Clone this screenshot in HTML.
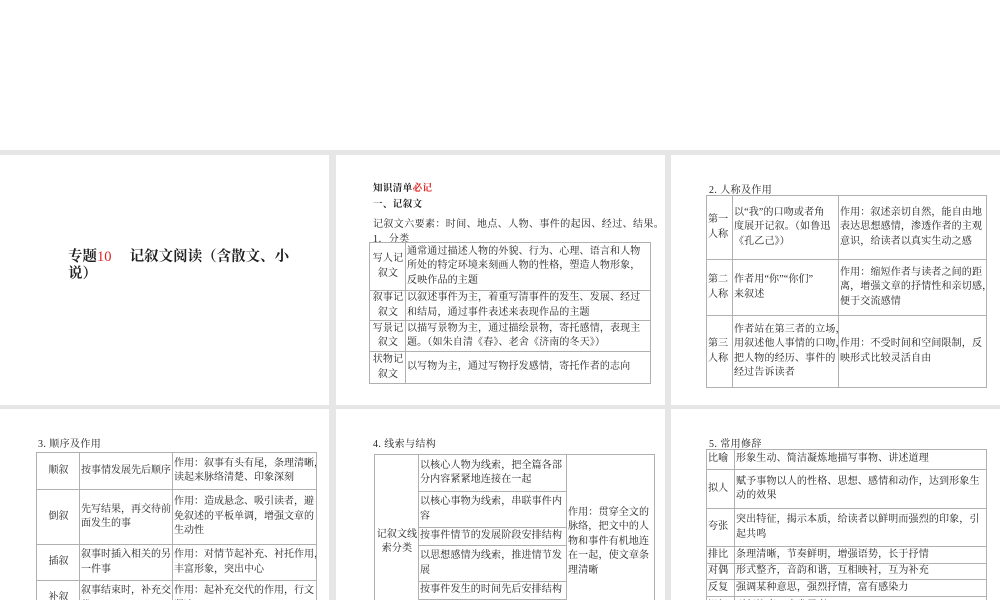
<!DOCTYPE html><html><head><meta charset="utf-8"><style>
body{margin:0;width:1000px;height:600px;overflow:hidden;background:#fff;position:relative;font-family:"Liberation Serif","Noto Serif CJK SC",serif;color:#222}
.bg{position:absolute;left:0;top:150px;width:1000px;height:450px;background:#e6e6e6}
.p{position:absolute;background:#fff;overflow:hidden}
.a{position:absolute;font-size:10px;letter-spacing:0.4px;white-space:nowrap}
table{position:absolute;border-collapse:collapse;font-size:10px;letter-spacing:0.15px;line-height:14.5px;table-layout:fixed}
td{border:1px solid #b0b0b0;padding:0 0 0 1px;vertical-align:middle;overflow:hidden;white-space:nowrap}
.c{text-align:center}
</style></head><body>
<div class="bg"></div>
<div class="p" style="left:0;top:155px;width:329px;height:250px">
<div style="position:absolute;left:68px;top:94px;width:240px;font-size:14.5px;font-weight:bold;line-height:17px;font-family:'Liberation Serif','Noto Serif CJK SC',serif">专题<span style="color:#d22;font-weight:normal">10</span>　 记叙文阅读（含散文、小说）</div>
</div>
<div class="p" style="left:336px;top:155px;width:329px;height:250px">
<div class="a" style="left:37px;top:25px;font-weight:bold;font-size:9.5px">知识清单<span style="color:#d22">必记</span></div>
<div class="a" style="left:37px;top:41px;font-weight:bold;font-size:9.5px">一、记叙文</div>
<div class="a" style="left:37px;top:60px">记叙文六要素：时间、地点、人物、事件的起因、经过、结果。</div>
<div class="a" style="left:37px;top:75px">1．分类</div>
<table style="left:33px;top:87px;width:282px"><col style="width:36px"><col>
<tr style="height:48px"><td class="c">写人记<br>叙文</td><td>通常通过描述人物的外貌、行为、心理、语言和人物<br>所处的特定环境来刻画人物的性格，塑造人物形象，<br>反映作品的主题</td></tr>
<tr style="height:30px"><td class="c">叙事记<br>叙文</td><td>以叙述事件为主，着重写清事件的发生、发展、经过<br>和结局，通过事件表述来表现作品的主题</td></tr>
<tr style="height:31px"><td class="c">写景记<br>叙文</td><td>以描写景物为主，通过描绘景物，寄托感情，表现主<br>题。（如朱自清《春》、老舍《济南的冬天》）</td></tr>
<tr style="height:32px"><td class="c">状物记<br>叙文</td><td>以写物为主，通过写物抒发感情，寄托作者的志向</td></tr>
</table></div>
<div class="p" style="left:671px;top:155px;width:329px;height:250px">
<div class="a" style="left:38px;top:26px">2. 人称及作用</div>
<table style="left:35px;top:40px;width:281px"><col style="width:26px"><col style="width:106px"><col>
<tr style="height:64px"><td>第一<br>人称</td><td>以“我”的口吻或者角<br>度展开记叙。（如鲁迅<br>《孔乙己》）</td><td>作用：叙述亲切自然，能自由地<br>表达思想感情，渗透作者的主观<br>意识，给读者以真实生动之感</td></tr>
<tr style="height:56px"><td>第二<br>人称</td><td>作者用“你”“你们”<br>来叙述</td><td>作用：缩短作者与读者之间的距<br>离，增强文章的抒情性和亲切感，<br>便于交流感情</td></tr>
<tr style="height:72px"><td>第三<br>人称</td><td>作者站在第三者的立场，<br>用叙述他人事情的口吻，<br>把人物的经历、事件的<br>经过告诉读者</td><td>作用：不受时间和空间限制，反<br>映形式比较灵活自由</td></tr>
</table></div>
<div class="p" style="left:0;top:409px;width:329px;height:191px">
<div class="a" style="left:38px;top:26px">3. 顺序及作用</div>
<table style="left:36px;top:43px;width:281px;letter-spacing:0"><col style="width:43px"><col style="width:93px"><col>
<tr style="height:37px"><td class="c">顺叙</td><td>按事情发展先后顺序</td><td>作用：叙事有头有尾，条理清晰，<br>读起来脉络清楚、印象深刻</td></tr>
<tr style="height:55px"><td class="c">倒叙</td><td>先写结果，再交待前<br>面发生的事</td><td>作用：造成悬念、吸引读者，避<br>免叙述的平板单调，增强文章的<br>生动性</td></tr>
<tr style="height:36px"><td class="c">插叙</td><td>叙事时插入相关的另<br>一件事</td><td>作用：对情节起补充、衬托作用，<br>丰富形象，突出中心</td></tr>
<tr style="height:36px"><td class="c">补叙</td><td>叙事结束时，补充交<br>代</td><td>作用：起补充交代的作用，行文<br>紧凑</td></tr>
</table></div>
<div class="p" style="left:336px;top:409px;width:329px;height:191px">
<div class="a" style="left:37px;top:26px">4. 线索与结构</div>
<table style="left:38px;top:45px;width:281px"><col style="width:44px"><col style="width:148px"><col>
<tr style="height:37px"><td class="c" rowspan="6">记叙文线<br>索分类</td><td>以核心人物为线索，把全篇各部<br>分内容紧紧地连接在一起</td><td rowspan="6">作用：贯穿全文的<br>脉络，把文中的人<br>物和事件有机地连<br>在一起，使文章条<br>理清晰</td></tr>
<tr style="height:36px"><td>以核心事物为线索，串联事件内<br>容</td></tr>
<tr style="height:18px"><td>按事件情节的发展阶段安排结构</td></tr>
<tr style="height:36px"><td>以思想感情为线索，推进情节发<br>展</td></tr>
<tr style="height:18px"><td>按事件发生的时间先后安排结构</td></tr>
<tr style="height:30px"><td>以空间转换为线索</td></tr>
</table></div>
<div class="p" style="left:671px;top:409px;width:329px;height:191px">
<div class="a" style="left:38px;top:26px">5. 常用修辞</div>
<table style="left:35px;top:40px;width:281px"><col style="width:28px"><col>
<tr style="height:20px"><td>比喻</td><td>形象生动、简洁凝炼地描写事物、讲述道理</td></tr>
<tr style="height:39px"><td>拟人</td><td>赋予事物以人的性格、思想、感情和动作，达到形象生<br>动的效果</td></tr>
<tr style="height:38px"><td>夸张</td><td>突出特征，揭示本质，给读者以鲜明而强烈的印象，引<br>起共鸣</td></tr>
<tr style="height:17px"><td>排比</td><td>条理清晰，节奏鲜明，增强语势，长于抒情</td></tr>
<tr style="height:16px"><td>对偶</td><td>形式整齐，音韵和谐，互相映衬，互为补充</td></tr>
<tr style="height:17px"><td>反复</td><td>强调某种意思，强烈抒情，富有感染力</td></tr>
<tr style="height:20px"><td>设问</td><td>引起注意，启发思考</td></tr>
</table></div>
</body></html>
